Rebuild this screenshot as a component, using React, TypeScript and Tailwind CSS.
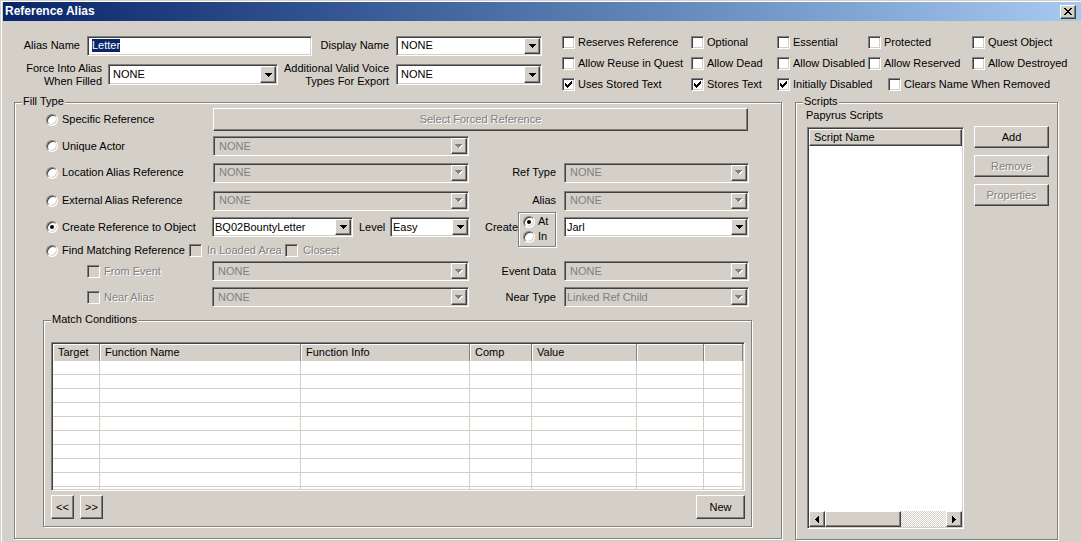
import React from "react";

const sunken =
  "border border-t-[#808080] border-l-[#808080] border-b-white border-r-white shadow-[inset_1px_1px_0_#404040,inset_-1px_-1px_0_#d4d0c8]";
const raised =
  "border border-t-white border-l-white border-b-[#404040] border-r-[#404040] shadow-[inset_-1px_-1px_0_#808080] bg-[#d4d0c8]";
const etched = "border border-[#808080] shadow-[inset_1px_1px_0_#fff,1px_1px_0_#fff]";
const dim = "text-[#808080] [text-shadow:1px_1px_0_#fff]";

type Px = [number, number, number];

const Pixels = ({ w, h, px, fill }: { w: number; h: number; px: Px[]; fill: string }) => (
  <svg width={w} height={h} viewBox={`0 0 ${w} ${h}`} shapeRendering="crispEdges">
    {px.map(([x, y, len], i) => (
      <rect key={i} x={x} y={y} width={len} height={1} fill={fill} />
    ))}
  </svg>
);

const downPx: Px[] = [
  [0, 0, 7],
  [1, 1, 5],
  [2, 2, 3],
  [3, 3, 1],
];

const DownArrow = ({ disabled }: { disabled?: boolean }) =>
  disabled ? (
    <span className="relative w-[8px] h-[5px]">
      <span className="absolute left-[1px] top-[1px] flex">
        <Pixels w={7} h={4} px={downPx} fill="#fff" />
      </span>
      <span className="absolute left-0 top-0 flex">
        <Pixels w={7} h={4} px={downPx} fill="#808080" />
      </span>
    </span>
  ) : (
    <Pixels w={7} h={4} px={downPx} fill="#000" />
  );

const checkPx: Px[] = [
  [6, 0, 1],
  [5, 1, 2],
  [0, 2, 1],
  [4, 2, 3],
  [0, 3, 2],
  [3, 3, 3],
  [0, 4, 5],
  [1, 5, 3],
  [2, 6, 1],
];

const closePx: Px[] = [
  [0, 0, 2],
  [6, 0, 2],
  [1, 1, 2],
  [5, 1, 2],
  [2, 2, 4],
  [3, 3, 2],
  [2, 4, 4],
  [1, 5, 2],
  [5, 5, 2],
  [0, 6, 2],
  [6, 6, 2],
];

const leftPx: Px[] = [
  [3, 0, 1],
  [2, 1, 2],
  [1, 2, 3],
  [0, 3, 4],
  [1, 4, 3],
  [2, 5, 2],
  [3, 6, 1],
];
const rightPx: Px[] = [
  [0, 0, 1],
  [0, 1, 2],
  [0, 2, 3],
  [0, 3, 4],
  [0, 4, 3],
  [0, 5, 2],
  [0, 6, 1],
];

const Combo = ({
  value,
  className,
  disabled,
  pad = "pl-[3px]",
}: {
  value: string;
  className: string;
  disabled?: boolean;
  pad?: string;
}) => (
  <div className={`${sunken} ${disabled ? "bg-[#d4d0c8]" : "bg-white"} flex p-[1px] shrink-0 ${className}`}>
    <span
      className={`flex-1 flex items-center overflow-hidden whitespace-nowrap ${pad} ${disabled ? "text-[#808080]" : ""}`}
    >
      {value}
    </span>
    <span className={`${raised} w-[16px] flex items-center justify-center`}>
      <DownArrow disabled={disabled} />
    </span>
  </div>
);

const Check = ({ checked, disabled }: { checked?: boolean; disabled?: boolean }) => (
  <span
    className={`${sunken} w-[13px] h-[13px] shrink-0 flex items-center justify-center ${
      disabled ? "bg-[#d4d0c8]" : "bg-white"
    }`}
  >
    {checked && <Pixels w={7} h={7} px={checkPx} fill="#000" />}
  </span>
);

const Radio = ({ checked }: { checked?: boolean }) => (
  <span className="w-[12px] h-[12px] shrink-0 rounded-full bg-white border border-t-[#808080] border-l-[#808080] border-b-white border-r-white shadow-[inset_1px_1px_0_#404040,inset_-1px_-1px_0_#d4d0c8] flex items-center justify-center">
    {checked && <span className="w-[4px] h-[4px] rounded-full bg-black" />}
  </span>
);

const RadioItem = ({ label, checked, className }: { label: string; checked?: boolean; className: string }) => (
  <div className={`flex items-center gap-[4px] shrink-0 whitespace-nowrap ${className}`}>
    <Radio checked={checked} />
    <span>{label}</span>
  </div>
);

const CheckItem = ({
  label,
  checked,
  disabled,
  className,
}: {
  label: string;
  checked?: boolean;
  disabled?: boolean;
  className: string;
}) => (
  <div className={`flex items-center shrink-0 whitespace-nowrap ${className}`}>
    <Check checked={checked} disabled={disabled} />
    <span className={disabled ? dim : ""}>{label}</span>
  </div>
);

const Group = ({ label, className, children }: { label: string; className: string; children?: React.ReactNode }) => (
  <div className={`relative shrink-0 flex flex-col ${etched} ${className}`}>
    <span className="absolute -top-[8px] left-[7px] px-[1px] bg-[#d4d0c8] leading-[13px]">{label}</span>
    {children}
  </div>
);

const Btn = ({ label, className, disabled }: { label: string; className: string; disabled?: boolean }) => (
  <div className={`${raised} flex items-center justify-center shrink-0 ${disabled ? dim : ""} ${className}`}>{label}</div>
);

const cols = ["w-[47px]", "w-[201px]", "w-[169px]", "w-[62px]", "w-[105px]", "w-[67px]", "flex-1"];
const heads = ["Target", "Function Name", "Function Info", "Comp", "Value", "", ""];

const checkRows: [string, boolean, string][][] = [
  [
    ["Reserves Reference", false, "w-[129px]"],
    ["Optional", false, "w-[86px]"],
    ["Essential", false, "w-[91px]"],
    ["Protected", false, "w-[104px]"],
    ["Quest Object", false, ""],
  ],
  [
    ["Allow Reuse in Quest", false, "w-[129px]"],
    ["Allow Dead", false, "w-[86px]"],
    ["Allow Disabled", false, "w-[91px]"],
    ["Allow Reserved", false, "w-[104px]"],
    ["Allow Destroyed", false, ""],
  ],
  [
    ["Uses Stored Text", true, "w-[129px]"],
    ["Stores Text", true, "w-[86px]"],
    ["Initially Disabled", true, "w-[111px]"],
    ["Clears Name When Removed", false, ""],
  ],
];

export default function App() {
  return (
    <div className="w-[1081px] h-[542px] bg-[#d4d0c8] overflow-hidden font-['Liberation_Sans',Arial,sans-serif] text-[11px] leading-[13px] text-black shadow-[inset_1px_1px_0_#d4d0c8,inset_2px_2px_0_#fff] select-none">
      {/* title bar */}
      <div className="ml-[3px] pt-[2px]">
        <div className="h-[19px] flex items-center bg-linear-to-r from-[#0a246a] to-[#a6caf0] pl-[2px] pr-[5px]">
          <span className="flex-1 text-white font-bold text-[12px]">Reference Alias</span>
          <div className={`${raised} w-[16px] h-[14px] flex items-center justify-center`}>
            <Pixels w={8} h={7} px={closePx} fill="#000" />
          </div>
        </div>
      </div>

      {/* top fields + flags */}
      <div className="flex h-[81px]">
        <div className="flex flex-col w-[542px] shrink-0">
          <div className="mt-[14px] h-[21px] flex items-center">
            <span className="w-[80px] text-right shrink-0">Alias Name</span>
            <div className={`${sunken} bg-white ml-[7px] w-[225px] h-[20px] p-[1px] pl-[4px] flex items-center shrink-0`}>
              <span className="bg-[#0a246a] text-white">Letter</span>
            </div>
            <span className="w-[77px] text-right shrink-0 whitespace-nowrap">Display Name</span>
            <Combo className="ml-[7px] w-[146px] h-[20px]" value="NONE" />
          </div>
          <div className="mt-[8px] h-[21px] flex items-center">
            <span className="w-[102px] text-right shrink-0 whitespace-nowrap">
              Force Into Alias
              <br />
              When Filled
            </span>
            <Combo className="ml-[6px] w-[170px] h-[21px]" value="NONE" />
            <span className="w-[111px] text-right shrink-0 whitespace-nowrap">
              Additional Valid Voice
              <br />
              Types For Export
            </span>
            <Combo className="ml-[7px] w-[146px] h-[21px]" value="NONE" />
          </div>
        </div>
        <div className="ml-[20px] mt-[11px] flex flex-col">
          {checkRows.map((row, i) => (
            <div key={i} className="h-[21px] flex items-center">
              {row.map(([label, checked, w]) => (
                <CheckItem key={label} label={label} checked={checked} className={`gap-[3px] ${w}`} />
              ))}
            </div>
          ))}
        </div>
      </div>

      <div className="flex">
        {/* Fill Type */}
        <Group label="Fill Type" className="ml-[14px] w-[768px] h-[437px]">
          <div className="mt-[5px] h-[23px] flex items-center">
            <RadioItem className="ml-[31px] w-[167px]" label="Specific Reference" />
            <Btn className="w-[535px] h-[23px]" label="Select Forced Reference" disabled />
          </div>
          <div className="mt-[5px] h-[20px] flex items-center">
            <RadioItem className="ml-[31px] w-[167px]" label="Unique Actor" />
            <Combo className="w-[256px] h-[20px]" value="NONE" disabled pad="pl-[4px]" />
          </div>
          <div className="mt-[6px] h-[21px] flex items-center">
            <RadioItem className="ml-[31px] w-[167px]" label="Location Alias Reference" />
            <Combo className="w-[256px] h-[20px]" value="NONE" disabled pad="pl-[4px]" />
            <span className="w-[87px] text-right shrink-0">Ref Type</span>
            <Combo className="ml-[8px] w-[185px] h-[20px]" value="NONE" disabled pad="pl-[4px]" />
          </div>
          <div className="mt-[7px] h-[21px] flex items-center">
            <RadioItem className="ml-[31px] w-[167px]" label="External Alias Reference" />
            <Combo className="w-[256px] h-[20px]" value="NONE" disabled pad="pl-[4px]" />
            <span className="w-[87px] text-right shrink-0">Alias</span>
            <Combo className="ml-[8px] w-[185px] h-[20px]" value="NONE" disabled pad="pl-[4px]" />
          </div>
          <div className="mt-[6px] h-[20px] flex items-center">
            <RadioItem className="ml-[31px] w-[166px]" label="Create Reference to Object" checked />
            <Combo className="w-[141px] h-[20px]" value="BQ02BountyLetter" pad="pl-[1px]" />
            <span className="ml-[6px] w-[31px] shrink-0">Level</span>
            <Combo className="w-[80px] h-[20px]" value="Easy" pad="pl-[1px]" />
            <span className="ml-[15px] w-[33px] shrink-0">Create</span>
            <div className={`${etched} w-[38px] h-[35px] mt-[5px] shrink-0 flex flex-col pl-[4px] pt-[1px]`}>
              <div className="h-[15px] flex items-center gap-[3px]">
                <Radio checked />
                <span>At</span>
              </div>
              <div className="h-[15px] flex items-center gap-[3px]">
                <Radio />
                <span>In</span>
              </div>
            </div>
            <Combo className="ml-[8px] w-[185px] h-[20px]" value="Jarl" pad="pl-[1px]" />
          </div>
          <div className="mt-[7px] h-[13px] flex items-center">
            <RadioItem className="ml-[31px] w-[143px]" label="Find Matching Reference" />
            <CheckItem className="w-[96px] gap-[5px]" label="In Loaded Area" disabled />
            <CheckItem className="gap-[5px]" label="Closest" disabled />
          </div>
          <div className="mt-[4px] h-[20px] flex items-center">
            <CheckItem className="ml-[72px] w-[125px] gap-[4px]" label="From Event" disabled />
            <Combo className="w-[257px] h-[20px]" value="NONE" disabled pad="pl-[4px]" />
            <span className="w-[87px] text-right shrink-0">Event Data</span>
            <Combo className="ml-[8px] w-[185px] h-[20px]" value="NONE" disabled pad="pl-[4px]" />
          </div>
          <div className="mt-[6px] h-[20px] flex items-center">
            <CheckItem className="ml-[72px] w-[125px] gap-[4px]" label="Near Alias" disabled />
            <Combo className="w-[257px] h-[20px]" value="NONE" disabled pad="pl-[4px]" />
            <span className="w-[87px] text-right shrink-0">Near Type</span>
            <Combo className="ml-[8px] w-[185px] h-[20px]" value="Linked Ref Child" disabled pad="pl-[1px]" />
          </div>

          {/* Match Conditions */}
          <Group label="Match Conditions" className="mt-[13px] ml-[28px] w-[709px] h-[207px]">
            <div className={`${sunken} bg-white ml-[7px] mt-[21px] w-[694px] h-[149px] p-[1px] flex flex-col overflow-hidden`}>
              <div className="h-[17px] flex bg-[#d4d0c8] shrink-0">
                {heads.map((h, i) => (
                  <div
                    key={i}
                    className={`${cols[i]} shrink-0 flex items-center pl-[5px] border-r border-r-[#808080] shadow-[inset_1px_1px_0_#fff] whitespace-nowrap`}
                  >
                    {h}
                  </div>
                ))}
              </div>
              {Array.from({ length: 10 }).map((_, r) => (
                <div key={r} className="h-[14px] flex border-b border-b-[#d4d0c8] shrink-0">
                  {cols.map((c, i) => (
                    <div key={i} className={`${c} shrink-0 border-r border-r-[#d4d0c8]`} />
                  ))}
                </div>
              ))}
            </div>
            <div className="mt-[4px] ml-[7px] w-[694px] h-[24px] flex">
              <Btn className="w-[23px] h-[24px]" label="<<" />
              <Btn className="ml-[6px] w-[23px] h-[24px]" label=">>" />
              <Btn className="ml-auto w-[49px] h-[24px]" label="New" />
            </div>
          </Group>
        </Group>

        {/* Scripts */}
        <Group label="Scripts" className="ml-[13px] w-[263px] h-[438px]">
          <span className="ml-[10px] mt-[6px]">Papyrus Scripts</span>
          <div className="mt-[5px] flex">
            <div className={`${sunken} bg-white ml-[11px] w-[157px] h-[402px] p-[1px] flex flex-col shrink-0`}>
              <div className={`${raised} h-[17px] flex items-center pl-[4px] shrink-0`}>Script Name</div>
              <div className="flex-1" />
              <div className="h-[16px] flex shrink-0">
                <div className={`${raised} w-[16px] flex items-center justify-center`}>
                  <Pixels w={4} h={7} px={leftPx} fill="#000" />
                </div>
                <div className={`${raised} w-[76px]`} />
                <div className="flex-1 bg-[image:repeating-conic-gradient(#d4d0c8_0_25%,#fff_0_50%)] bg-[length:2px_2px]" />
                <div className={`${raised} w-[16px] flex items-center justify-center`}>
                  <Pixels w={4} h={7} px={rightPx} fill="#000" />
                </div>
              </div>
            </div>
            <div className="ml-[10px] -mt-[1px] flex flex-col gap-[7px]">
              <Btn className="w-[75px] h-[22px]" label="Add" />
              <Btn className="w-[75px] h-[22px]" label="Remove" disabled />
              <Btn className="w-[75px] h-[22px]" label="Properties" disabled />
            </div>
          </div>
        </Group>
      </div>
    </div>
  );
}
